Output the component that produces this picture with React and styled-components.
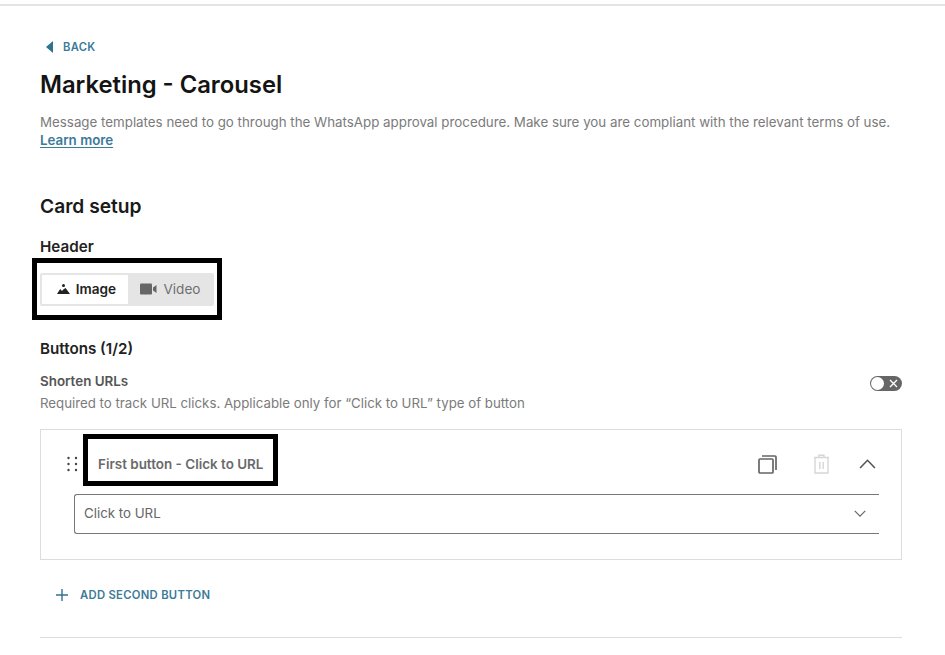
import React from 'react';
import styled, {createGlobalStyle} from 'styled-components';

const GlobalStyle = createGlobalStyle`
    html, body {
        margin: 0;
        padding: 0;
        background: #fff;
        font-family: Inter, "Liberation Sans", sans-serif;
    }
`;

const Page = styled.div`
    width: 945px;
    height: 655px;
    overflow: hidden;
    padding-top: 4px;
    box-sizing: border-box;
`;

const TopRule = styled.div`
    height: 2px;
    background: #e4e4e4;
`;

const Content = styled.div`
    padding: 0 43px 0 40px;
`;

const BackLink = styled.a`
    display: flex;
    align-items: center;
    gap: 10px;
    height: 16px;
    margin: 33px 0 0 6px;
    color: #3b7a98;
    font-size: 11.2px;
    font-weight: 600;
    letter-spacing: 0.3px;
`;

const Title = styled.h1`
    margin: 15px 0 0;
    height: 30px;
    line-height: 30px;
    color: #141414;
    font-size: 23.8px;
    font-weight: 600;
`;

const Description = styled.p`
    margin: 13px 0 0;
    color: #7b7b7b;
    font-size: 13.34px;
    line-height: 18px;
    white-space: nowrap;
`;

const LearnMore = styled.a`
    color: #3b7a98;
    font-weight: 600;
    text-decoration: underline;
    text-underline-offset: 2px;
`;

const SectionTitle = styled.h2`
    margin: 45px 0 0;
    height: 24px;
    line-height: 24px;
    color: #1a1a1a;
    font-size: 19.2px;
    font-weight: 600;
`;

const Label = styled.div`
    margin-top: ${props => props.$top}px;
    height: 18px;
    line-height: 18px;
    color: #222;
    font-size: 15.2px;
    font-weight: 600;
`;

const Highlight = styled.div`
    display: inline-flex;
    align-items: center;
    box-sizing: border-box;
    border: 5px solid #000;
`;

const HeaderHighlight = styled(Highlight)`
    display: flex;
    width: 190px;
    height: 62px;
    margin: 2px 0 0 -8px;
    padding: 0 3px;
`;

const Segmented = styled.div`
    display: flex;
    width: 174px;
    height: 33px;
    padding: 2px;
    box-sizing: border-box;
    background: #e5e5e5;
    border-radius: 2px;
`;

const Segment = styled.div`
    display: flex;
    align-items: center;
    justify-content: center;
    gap: 6px;
    box-sizing: border-box;
    width: ${props => props.$active ? 86 : 84}px;
    padding-left: ${props => props.$active ? 3 : 1}px;
    background: ${props => props.$active ? '#fff' : 'transparent'};
    color: ${props => props.$active ? '#222' : '#6f6f6f'};
    font-size: 13.6px;
    font-weight: ${props => props.$active ? 600 : 400};
`;

const ToggleRow = styled.div`
    display: flex;
    align-items: center;
    justify-content: space-between;
    margin-top: 14px;
    height: 18px;
`;

const SubLabel = styled.div`
    color: #555;
    font-size: 13.4px;
    font-weight: 600;
`;

const Toggle = styled.div`
    position: relative;
    width: 32px;
    height: 15px;
    margin-top: 4px;
    border-radius: 8px;
    background: #666;
`;

const ToggleKnob = styled.div`
    position: absolute;
    left: 1px;
    top: 1px;
    width: 13px;
    height: 13px;
    border-radius: 50%;
    background: #fff;
`;

const ToggleMark = styled.svg`
    position: absolute;
    right: 4px;
    top: 3px;
`;

const Hint = styled.div`
    margin-top: 4px;
    height: 18px;
    line-height: 18px;
    color: #7b7b7b;
    font-size: 13.27px;
`;

const ButtonCard = styled.div`
    box-sizing: border-box;
    height: 131px;
    margin-top: 17px;
    padding: 4px 0 0 33px;
    border: 1px solid #dcdcdc;
`;

const CardHead = styled.div`
    display: flex;
    align-items: center;
    height: 52px;
`;

const DragHandle = styled.svg`
    margin: 8px 5px 0 -7px;
`;

const NameHighlight = styled(Highlight)`
    width: 195px;
    height: 52px;
    padding: 8px 0 0 10px;
    color: #6a6a6a;
    font-size: 13.45px;
    font-weight: 600;
    white-space: nowrap;
`;

const CardActions = styled.div`
    display: flex;
    align-items: center;
    margin: 8px 25px 0 auto;
`;

const ActionSlot = styled.div`
    display: flex;
    margin-left: ${props => props.$gap || 0}px;
`;

const Select = styled.div`
    display: flex;
    align-items: center;
    justify-content: space-between;
    box-sizing: border-box;
    width: 805px;
    height: 40px;
    margin-top: 8px;
    padding: 0 13px 2px 9px;
    border: 1px solid #777;
    border-right: none;
    border-radius: 3px 0 0 3px;
    color: #666;
    font-size: 13.3px;
`;

const AddButton = styled.a`
    display: flex;
    align-items: center;
    gap: 12px;
    height: 16px;
    margin: 27px 0 0 16px;
    color: #3b7a98;
    font-size: 11.25px;
    font-weight: 600;
    letter-spacing: 0.3px;
`;

const Divider = styled.div`
    height: 1px;
    margin-top: 34px;
    background: #dcdcdc;
`;

const BackIcon = () => (
    <svg width="7" height="12" viewBox="0 0 7 12"><path d="M7 0V12L0 6Z" fill="#2f7390"/></svg>
);

const ImageIcon = () => (
    <svg width="13" height="10" viewBox="0 0 13 10" fill="#222">
        <circle cx="6.5" cy="1.6" r="1.5"/>
        <path d="M0 10L3.2 5 5 7 6.6 5.2 8.6 4 13 10Z"/>
    </svg>
);

const VideoIcon = () => (
    <svg width="17" height="12" viewBox="0 0 17 12" fill="#666">
        <rect x="0" y="0.5" width="12" height="11" rx="1"/>
        <path d="M13 4.6L16.5 2V10L13 7.4Z"/>
    </svg>
);

const CopyIcon = () => (
    <svg width="19" height="19" viewBox="0 0 19 19" fill="none" stroke="#666" strokeWidth="1.7">
        <rect x="1" y="4" width="14" height="14" rx="1"/>
        <path d="M4 1H17A1 1 0 0 1 18 2V15"/>
    </svg>
);

const TrashIcon = () => (
    <svg width="17" height="20" viewBox="0 0 17 20" fill="none" stroke="#d6d6d6" strokeWidth="1.4">
        <path d="M1 3.5H16M6 3.5V1.2H11V3.5"/>
        <path d="M2 3.5V19H15V3.5"/>
        <path d="M6.8 8V15M10.2 8V15"/>
    </svg>
);

const Chevron = ({width, height, color, strokeWidth, up}) => (
    <svg width={width} height={height} viewBox="0 0 16 9" fill="none" stroke={color} strokeWidth={strokeWidth}>
        <path d={up ? "M1 8.2L8 1 15 8.2" : "M1 1L8 8 15 1"}/>
    </svg>
);

const App = () => (
    <Page>
        <GlobalStyle/>
        <TopRule/>
        <Content>
            <BackLink><BackIcon/>BACK</BackLink>
            <Title>Marketing - Carousel</Title>
            <Description>
                Message templates need to go through the WhatsApp approval procedure. Make sure you are compliant with the relevant terms of use.<br/>
                <LearnMore>Learn more</LearnMore>
            </Description>

            <SectionTitle>Card setup</SectionTitle>
            <Label $top={20}>Header</Label>
            <HeaderHighlight>
                <Segmented>
                    <Segment $active><ImageIcon/>Image</Segment>
                    <Segment><VideoIcon/>Video</Segment>
                </Segmented>
            </HeaderHighlight>

            <Label $top={20}>Buttons (1/2)</Label>
            <ToggleRow>
                <SubLabel>Shorten URLs</SubLabel>
                <Toggle>
                    <ToggleKnob/>
                    <ToggleMark width="9" height="9" viewBox="0 0 9 9" stroke="#fff" strokeWidth="1.4">
                        <path d="M1 1L8 8M8 1L1 8"/>
                    </ToggleMark>
                </Toggle>
            </ToggleRow>
            <Hint>Required to track URL clicks. Applicable only for “Click to URL” type of button</Hint>

            <ButtonCard>
                <CardHead>
                    <DragHandle width="11" height="16" viewBox="0 0 11 16" fill="#444">
                        <circle cx="1.5" cy="2" r="1.2"/>
                        <circle cx="9" cy="2" r="1.2"/>
                        <circle cx="1.5" cy="8" r="1.2"/>
                        <circle cx="9" cy="8" r="1.2"/>
                        <circle cx="1.5" cy="14" r="1.2"/>
                        <circle cx="9" cy="14" r="1.2"/>
                    </DragHandle>
                    <NameHighlight>First button - Click to URL</NameHighlight>
                    <CardActions>
                        <ActionSlot><CopyIcon/></ActionSlot>
                        <ActionSlot $gap={36}><TrashIcon/></ActionSlot>
                        <ActionSlot $gap={29}><Chevron width={17} height={10} color="#555" strokeWidth={1.5} up/></ActionSlot>
                    </CardActions>
                </CardHead>
                <Select>
                    Click to URL
                    <Chevron width={12} height={7} color="#666" strokeWidth={1.6}/>
                </Select>
            </ButtonCard>

            <AddButton>
                <svg width="12" height="12" viewBox="0 0 12 12" stroke="#2f7390" strokeWidth="1.4"><path d="M6 0V12M0 6H12"/></svg>
                ADD SECOND BUTTON
            </AddButton>
            <Divider/>
        </Content>
    </Page>
);

export default App;
